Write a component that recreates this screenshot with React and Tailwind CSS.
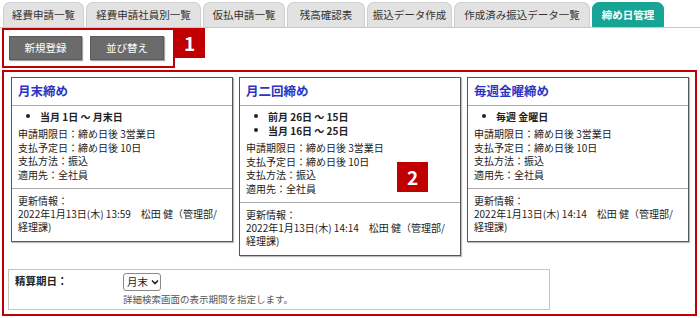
const FONT = { fontFamily: '"Noto Sans CJK JP", "Noto Sans", sans-serif' };

const TABS = [
  { label: "経費申請一覧", w: "w-[81px]" },
  { label: "経費申請社員別一覧", w: "w-[115px]" },
  { label: "仮払申請一覧", w: "w-[82px]" },
  { label: "残高確認表", w: "w-[78px]" },
  { label: "振込データ作成", w: "w-[85px]" },
  { label: "作成済み振込データ一覧", w: "w-[136px]" },
  { label: "締め日管理", w: "w-[72px]", active: true },
];

const CARDS = [
  {
    title: "月末締め",
    bullets: ["当月 1日 ～ 月末日"],
    updated: "2022年1月13日(木) 13:59　松田 健（管理部/",
  },
  {
    title: "月二回締め",
    bullets: ["前月 26日 ～ 15日", "当月 16日 ～ 25日"],
    updated: "2022年1月13日(木) 14:14　松田 健（管理部/",
  },
  {
    title: "毎週金曜締め",
    bullets: ["毎週 金曜日"],
    updated: "2022年1月13日(木) 14:14　松田 健（管理部/",
  },
];

function Badge({ n, className }) {
  return (
    <div className={`absolute bg-[#c00000] text-white font-bold text-[19px] flex items-center justify-center ${className}`}>
      {n}
    </div>
  );
}

function Card({ card }) {
  return (
    <div className="w-[222px] bg-white border border-[#555] shadow-[1px_1px_1px_rgba(0,0,0,0.25)]">
      <div className="h-[28px] border-b border-[#aaa] flex items-center pl-[6px]">
        <span className="text-[#2a35c4] font-bold text-[12.5px]">{card.title}</span>
      </div>
      <div className="px-[6px] pt-[3px] pb-[7px] text-[10px] text-[#222]">
        <ul className="mb-[4px]">
          {card.bullets.map((b) => (
            <li key={b} className="flex items-center h-[14px] font-bold">
              <span className="w-[4px] h-[4px] rounded-full bg-[#222] ml-[8px] mr-[10px]" />
              {b}
            </li>
          ))}
        </ul>
        <div className="leading-[13.5px]">
          <div>申請期限日：締め日後 3営業日</div>
          <div>支払予定日：締め日後 10日</div>
          <div>支払方法：振込</div>
          <div>適用先：全社員</div>
        </div>
      </div>
      <div className="border-t border-[#aaa] px-[6px] pt-[5px] pb-[8px] text-[10px] leading-[13px] text-[#222]">
        <div>更新情報：</div>
        <div className="whitespace-nowrap">{card.updated}</div>
        <div>経理課)</div>
      </div>
    </div>
  );
}

export default function App() {
  return (
    <div className="w-[700px] h-[318px] bg-white relative overflow-hidden" style={FONT}>
      <div className="flex items-end gap-[2px] pl-[3px] pt-[2px] h-[28px] border-b border-[#c8c8c8]">
        {TABS.map((t) => (
          <div
            key={t.label}
            className={`${t.w} h-[25px] rounded-t-[7px] flex items-center justify-center text-[10.5px] ${
              t.active
                ? "bg-[#16a594] text-white font-bold border border-[#16a594]"
                : "bg-[#e2e2e2] text-[#333] border border-[#cfcfcf] border-b-0"
            }`}
          >
            {t.label}
          </div>
        ))}
      </div>

      <div className="relative ml-[2px] w-[173px] h-[40px] border-2 border-[#c00000] flex gap-[8px] pl-[5px] pt-[6px]">
        <button className="w-[73px] h-[24px] bg-[#6b6b6b] text-white text-[10.5px] border border-[#5a5a5a] shadow-[1px_1px_1px_rgba(0,0,0,0.35)]">
          新規登録
        </button>
        <button className="w-[74px] h-[24px] bg-[#6b6b6b] text-white text-[10.5px] border border-[#5a5a5a] shadow-[1px_1px_1px_rgba(0,0,0,0.35)]">
          並び替え
        </button>
        <Badge n="1" className="left-[170px] -top-[2px] w-[31px] h-[30px]" />
      </div>

      <div className="relative mt-[2px] ml-[2px] w-[695px] h-[246px] border-2 border-[#c00000] pl-[7px] pt-[5px]">
        <div className="flex items-start gap-[6px]">
          {CARDS.map((c) => (
            <Card key={c.title} card={c} />
          ))}
        </div>
        <Badge n="2" className="left-[393px] top-[90px] w-[31px] h-[30px]" />

        <div className="mt-[13px] -ml-[3px] w-[542px] h-[41px] border border-[#c4c4c4] flex">
          <div className="w-[114px] pl-[6px] pt-[3px] text-[10.5px] font-bold text-[#222]">精算期日：</div>
          <div className="pt-[3px]">
            <div className="w-[38px] h-[18px] border border-[#8a8a8a] rounded-[3px] flex items-center pl-[3px] gap-[3px] text-[10.5px] text-[#222] bg-white">
              月末
              <svg width="8" height="6" viewBox="0 0 8 6">
                <path d="M1 1.5 L4 4.5 L7 1.5" stroke="#222" strokeWidth="1.6" fill="none" />
              </svg>
            </div>
            <div className="text-[9.5px] text-[#555] leading-[13px] mt-[2px]">詳細検索画面の表示期間を指定します。</div>
          </div>
        </div>
      </div>
    </div>
  );
}
